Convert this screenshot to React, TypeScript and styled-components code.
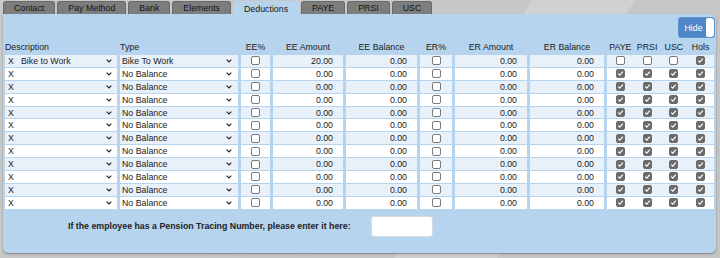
import React from 'react';
import styled, { createGlobalStyle } from 'styled-components';

const GlobalStyle = createGlobalStyle`
  html, body { margin: 0; padding: 0; }
  body {
    width: 720px;
    height: 258px;
    overflow: hidden;
    font-family: "Liberation Sans", Arial, sans-serif;
    font-size: 8.8px;
    color: #1c1c1c;
    background:
      linear-gradient(118deg, transparent 62%, rgba(255,255,255,0.18) 62%, rgba(255,255,255,0.18) 74%, transparent 74%),
      linear-gradient(160deg, #c9c9c9 0%, #c4c4c4 100%);
  }
`;

const COLS = '112px 118px 29px 70px 71px 32px 72px 74px 107px';

const Page = styled.div`
  padding: 1px 4px 0 3px;
`;

const TabBar = styled.div`
  display: flex;
  gap: 2px;
  height: 13px;
`;

const Tab = styled.div<{ $active?: boolean }>`
  display: flex;
  align-items: center;
  padding: 0 10px;
  height: ${p => (p.$active ? '14px' : '13px')};
  box-sizing: border-box;
  border: 1px solid ${p => (p.$active ? '#b6d4ee' : '#6a6a6a')};
  border-bottom: none;
  border-radius: 3px 3px 0 0;
  background: ${p => (p.$active ? '#b6d4ee' : '#7d7d7d')};
  color: #151515;
  position: relative;
  z-index: ${p => (p.$active ? 1 : 0)};
`;

const Panel = styled.div`
  height: 239px;
  box-sizing: border-box;
  background: #b6d4ee;
  border-radius: 0 5px 5px 5px;
  box-shadow: 0 1px 2px rgba(0, 0, 0, 0.35);
  padding: 3px 1px 0 2px;
`;

const Toolbar = styled.div`
  display: flex;
  justify-content: flex-end;
  height: 21px;
  margin-bottom: 2px;
`;

const HideToggle = styled.div`
  display: flex;
  align-items: stretch;
  width: 37px;
  box-sizing: border-box;
  background: #4f86c8;
  border: 1px solid #5d92d0;
  border-radius: 3px;
  overflow: hidden;
`;

const HideLabel = styled.span`
  flex: 1;
  display: flex;
  align-items: center;
  justify-content: center;
  color: #fff;
  padding-left: 2px;
`;

const HideKnob = styled.span`
  width: 8px;
  background: #fff;
  border-radius: 2px 3px 3px 2px;
`;

const Table = styled.div`
  display: flex;
  flex-direction: column;
  gap: 1px;
`;

const HeadRow = styled.div`
  display: grid;
  grid-template-columns: ${COLS};
  column-gap: 3px;
  height: 14px;
  align-items: center;
  color: #222;
`;

const HeadCell = styled.div<{ $left?: boolean }>`
  text-align: ${p => (p.$left ? 'left' : 'center')};
  white-space: nowrap;
`;

const FlagHeads = styled.div`
  display: grid;
  grid-template-columns: repeat(4, 1fr);
  text-align: center;
`;

const Row = styled.div<{ $alt: boolean }>`
  display: grid;
  grid-template-columns: ${COLS};
  column-gap: 3px;
  height: 11.9px;

  & > div {
    background: ${p => (p.$alt ? '#e8f0fa' : '#ffffff')};
    display: flex;
    align-items: center;
    min-width: 0;
  }
`;

const DescCell = styled.div`
  padding-left: 3px;
`;

const RemoveMark = styled.span`
  width: 11px;
`;

const SelectBox = styled.div<{ $padRight: number }>`
  flex: 1;
  display: flex;
  align-items: center;
  justify-content: space-between;
  padding: 0 ${p => p.$padRight}px 0 2px;
  height: 100%;
`;

const CheckCell = styled.div`
  justify-content: center;
`;

const AmountCell = styled.div`
  justify-content: flex-end;
  padding-right: 10px;
`;

const FlagsCell = styled.div`
  display: grid !important;
  grid-template-columns: repeat(4, 1fr);
  justify-items: center;
`;

const Box = styled.span<{ $checked?: boolean }>`
  width: 9px;
  height: 9px;
  box-sizing: border-box;
  border: 1px solid ${p => (p.$checked ? '#6b6b6b' : '#7a7a7a')};
  border-radius: 2px;
  background: ${p => (p.$checked ? '#6b6b6b' : '#fff')};
  display: flex;
  align-items: center;
  justify-content: center;
`;

const Footer = styled.div`
  display: flex;
  align-items: center;
  gap: 20px;
  margin-top: 7px;
  padding-left: 63px;
`;

const FooterLabel = styled.span`
  font-weight: bold;
  color: #222;
`;

const TracingInput = styled.div`
  width: 62px;
  height: 21px;
  box-sizing: border-box;
  background: #fff;
  border: 1px solid #d3dde8;
  border-radius: 3px;
`;

const Chevron = () => (
  <svg width="6" height="4" viewBox="0 0 6 4">
    <polyline points="0.7,0.7 3,3 5.3,0.7" fill="none" stroke="#222" strokeWidth="1.1" />
  </svg>
);

const Check = ({ checked }: { checked?: boolean }) => (
  <Box $checked={checked}>
    {checked && (
      <svg width="7" height="7" viewBox="0 0 7 7">
        <polyline points="1.2,3.6 2.8,5.1 5.8,1.6" fill="none" stroke="#fff" strokeWidth="1.2" />
      </svg>
    )}
  </Box>
);

const tabs = ['Contact', 'Pay Method', 'Bank', 'Elements', 'Deductions', 'PAYE', 'PRSI', 'USC'];

const rows = Array.from({ length: 12 }, (_, i) => ({
  desc: i === 0 ? 'Bike to Work' : '',
  type: i === 0 ? 'Bike To Work' : 'No Balance',
  eeAmount: i === 0 ? '20.00' : '0.00',
  flags: i === 0 ? [false, false, false, true] : [true, true, true, true],
}));

export default function App() {
  return (
    <>
      <GlobalStyle />
      <Page>
        <TabBar>
          {tabs.map(t => (
            <Tab key={t} $active={t === 'Deductions'}>{t}</Tab>
          ))}
        </TabBar>
        <Panel>
          <Toolbar>
            <HideToggle>
              <HideLabel>Hide</HideLabel>
              <HideKnob />
            </HideToggle>
          </Toolbar>
          <Table>
            <HeadRow>
              <HeadCell $left>Description</HeadCell>
              <HeadCell $left>Type</HeadCell>
              <HeadCell>EE%</HeadCell>
              <HeadCell>EE Amount</HeadCell>
              <HeadCell>EE Balance</HeadCell>
              <HeadCell>ER%</HeadCell>
              <HeadCell>ER Amount</HeadCell>
              <HeadCell>ER Balance</HeadCell>
              <FlagHeads>
                <span>PAYE</span>
                <span>PRSI</span>
                <span>USC</span>
                <span>Hols</span>
              </FlagHeads>
            </HeadRow>
            {rows.map((r, i) => (
              <Row key={i} $alt={i % 2 === 0}>
                <DescCell>
                  <RemoveMark>X</RemoveMark>
                  <SelectBox $padRight={5}>
                    <span>{r.desc}</span>
                    <Chevron />
                  </SelectBox>
                </DescCell>
                <div>
                  <SelectBox $padRight={6}>
                    <span>{r.type}</span>
                    <Chevron />
                  </SelectBox>
                </div>
                <CheckCell><Check /></CheckCell>
                <AmountCell>{r.eeAmount}</AmountCell>
                <AmountCell>0.00</AmountCell>
                <CheckCell><Check /></CheckCell>
                <AmountCell>0.00</AmountCell>
                <AmountCell>0.00</AmountCell>
                <FlagsCell>
                  {r.flags.map((f, j) => (
                    <Check key={j} checked={f} />
                  ))}
                </FlagsCell>
              </Row>
            ))}
          </Table>
          <Footer>
            <FooterLabel>If the employee has a Pension Tracing Number, please enter it here:</FooterLabel>
            <TracingInput />
          </Footer>
        </Panel>
      </Page>
    </>
  );
}
